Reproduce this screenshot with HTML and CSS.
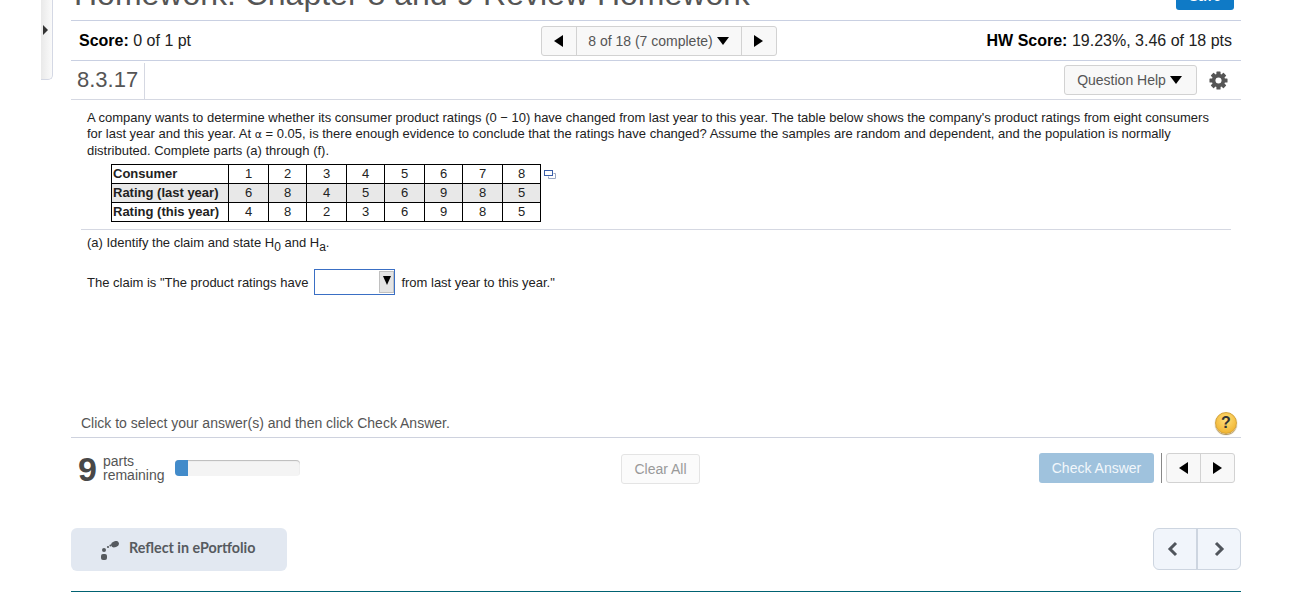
FILE: index.html
```html
<!DOCTYPE html>
<html lang="en">
<head>
<meta charset="utf-8">
<title>Homework</title>
<link rel="stylesheet" href="styles.css">
</head>
<body>
<div class="side-tab"><span class="tri tri-right tri-side"></span></div>
<main class="page">
  <header class="title-row">
    <h1 class="title">Homework: Chapter 8 and 9 Review Homework</h1>
    <button class="save">Save</button>
  </header>

  <section class="score-row">
    <div class="score"><b>Score:</b> 0 of 1 pt</div>
    <div class="pager">
      <span class="pager-btn"><span class="tri tri-left"></span></span>
      <span class="pager-mid">8 of 18 (7 complete)<span class="tri tri-down"></span></span>
      <span class="pager-btn"><span class="tri tri-right"></span></span>
    </div>
    <div class="hw"><b>HW Score:</b> 19.23%, 3.46 of 18 pts</div>
  </section>

  <section class="q-row">
    <div class="q-num">8.3.17</div>
    <div class="q-tools">
      <button class="help-btn">Question Help<span class="tri tri-down"></span></button>
      <svg class="gear" width="19" height="19" viewBox="0 0 20 20">
        <g fill="#555">
          <rect x="7.800" y="0.500" width="4.400" height="19" rx="0.600"/>
          <rect x="7.800" y="0.500" width="4.400" height="19" rx="0.600" transform="rotate(45 10 10)"/>
          <rect x="7.800" y="0.500" width="4.400" height="19" rx="0.600" transform="rotate(90 10 10)"/>
          <rect x="7.800" y="0.500" width="4.400" height="19" rx="0.600" transform="rotate(135 10 10)"/>
          <circle cx="10" cy="10" r="7"/>
        </g>
        <circle cx="10" cy="10" r="3.200" fill="#fff"/>
      </svg>
    </div>
  </section>

  <section class="question">
    <p class="prompt">A company wants to determine whether its consumer product ratings (0 − 10) have changed from last year to this year. The table below shows the company's product ratings from eight consumers for last year and this year. At <span class="alpha">α</span> = 0.05, is there enough evidence to conclude that the ratings have changed? Assume the samples are random and dependent, and the population is normally distributed. Complete parts (a) through (f).</p>
    <div class="table-wrap">
      <table class="data">
        <tr><th>Consumer</th><td>1</td><td>2</td><td>3</td><td>4</td><td>5</td><td>6</td><td>7</td><td>8</td></tr>
        <tr class="shade"><th>Rating (last year)</th><td>6</td><td>8</td><td>4</td><td>5</td><td>6</td><td>9</td><td>8</td><td>5</td></tr>
        <tr><th>Rating (this year)</th><td>4</td><td>8</td><td>2</td><td>3</td><td>6</td><td>9</td><td>8</td><td>5</td></tr>
      </table>
      <svg class="copy" width="12" height="9" viewBox="0 0 12 9">
        <rect x="0.500" y="0.500" width="8" height="5" fill="#fff" stroke="#3b5ea8"/>
        <path d="M9.500 3.500h2v5h-7v-2" fill="none" stroke="#9aa7c4"/>
      </svg>
    </div>
    <div class="part">
      <p class="part-a">(a) Identify the claim and state H<sub>0</sub> and H<sub>a</sub>.</p>
      <p class="claim">The claim is "The product ratings have <span class="select"><span class="select-arrow"><span class="tri tri-small"></span></span></span> from last year to this year."</p>
    </div>
  </section>

  <section class="hint-row">
    <span class="hint">Click to select your answer(s) and then click Check Answer.</span>
    <span class="help-circle">?</span>
  </section>

  <section class="action-row">
    <div class="parts">
      <span class="big-nine">9</span>
      <span class="parts-label">parts<br>remaining</span>
      <span class="progress"><span class="progress-fill"></span></span>
    </div>
    <button class="clear">Clear All</button>
    <div class="check-group">
      <button class="check">Check Answer</button>
      <span class="sep"></span>
      <div class="mini-nav">
        <span class="mini-btn"><span class="tri tri-left"></span></span>
        <span class="mini-btn"><span class="tri tri-right"></span></span>
      </div>
    </div>
  </section>

  <section class="foot-row">
    <button class="reflect">
      <svg class="reflect-icon" width="18" height="19" viewBox="0 0 18 19">
        <g fill="#565a5f">
          <rect x="0" y="13" width="6" height="6" rx="2"/>
          <circle cx="3" cy="9" r="2"/>
          <circle cx="7" cy="6" r="1.100"/>
          <circle cx="9.500" cy="4.500" r="1.100"/>
          <ellipse cx="14" cy="3.200" rx="4" ry="3" transform="rotate(-20 14 3.200)"/>
        </g>
      </svg>
      Reflect in ePortfolio
    </button>
    <div class="big-nav">
      <span class="big-btn"><svg class="chev-left" width="11" height="16" viewBox="0 0 11 16"><path d="M9 2L3 8l6 6" fill="none" stroke="#50555c" stroke-width="3"/></svg></span>
      <span class="big-btn"><svg width="11" height="16" viewBox="0 0 11 16"><path d="M2 2l6 6-6 6" fill="none" stroke="#50555c" stroke-width="3"/></svg></span>
    </div>
  </section>
</main>
</body>
</html>
```
FILE: styles.css
```css
* { box-sizing: border-box; }
html, body { margin: 0; padding: 0; height: 592px; overflow: hidden; background: #fff; }
body { font-family: "Liberation Sans", Arial, sans-serif; color: #333; font-size: 12px; position: relative; }
p, h1 { margin: 0; }
button { font-family: inherit; cursor: pointer; }

.tri { display: inline-block; width: 0; height: 0; border-style: solid; border-color: transparent; }
.tri-left { border-width: 6.500px 9px 6.500px 0; border-right-color: #000; }
.tri-right { border-width: 6.500px 0 6.500px 9px; border-left-color: #000; }
.tri-down { border-width: 8px 6.500px 0; border-top-color: #000; margin-left: 4px; }
.tri-small { border-width: 9px 4px 0; border-top-color: #000; }

.side-tab { position: absolute; left: 41px; top: 0; width: 12px; height: 80px; background: linear-gradient(90deg, #e9e9e9, #fafafa); border: 1px solid #d4d8e4; border-width: 0 1px 1px 0; border-radius: 0 0 5px 0; display: flex; align-items: flex-start; padding: 25px 0 0 2px; }
.tri-side { border-width: 5px 0 5px 5px; border-left-color: #333; }

.page { width: 1170px; margin-left: 71px; }

.title-row { height: 21px; border-bottom: 1px solid #c9d0e2; overflow: hidden; display: flex; justify-content: space-between; align-items: flex-start; padding: 0 7px 0 3px; }
.title { font-size: 32px; font-weight: normal; color: #555; line-height: 38px; margin-top: -25px; white-space: nowrap; }
.save { width: 58px; height: 28px; margin-top: -18px; background: #0f7ac6; border: 0; border-radius: 3px; color: #fff; font-size: 14px; padding: 0; }

.score-row { height: 40px; border-bottom: 1px solid #c9d0e2; display: grid; grid-template-columns: 1fr auto 1fr; align-items: center; padding: 0 9px 0 8px; font-size: 16px; color: #222; }
.score-row b { color: #000; }
.hw { text-align: right; }
.pager { display: flex; height: 30px; width: 236px; margin-left: 6px; border: 1px solid #d2d2d2; border-radius: 3px; background: #f8f8f8; font-size: 14px; color: #555; }
.pager-btn { width: 34px; display: flex; align-items: center; justify-content: center; }
.pager-mid { flex: 1; display: flex; align-items: center; justify-content: center; border: solid #d2d2d2; border-width: 0 1px; white-space: nowrap; }

.q-row { height: 39px; border-bottom: 1px solid #d5d8e2; display: flex; justify-content: space-between; align-items: center; }
.q-num { width: 74px; height: 36px; margin-top: 1px; line-height: 34px; font-size: 22px; color: #555; padding-left: 6px; border-right: 1px solid #d5d8e2; }
.q-tools { display: flex; align-items: center; gap: 12px; padding-right: 13px; }
.help-btn { width: 133px; height: 30px; padding: 0 2px 0 0; background: #f8f8f8; border: 1px solid #d2d2d2; border-radius: 3px; font-size: 14px; color: #555; display: flex; align-items: center; justify-content: center; }

.question { height: 308px; padding: 0 10px; color: #222; }
.prompt { padding: 10px 6px 0; line-height: 16px; font-size: 13px; height: 64px; }
.alpha { font-family: "DejaVu Sans", sans-serif; font-size: 11px; }
.table-wrap { display: flex; align-items: flex-start; padding-left: 30px; gap: 3px; height: 66px; border-bottom: 1px solid #d5d8e2; }
.data { border-collapse: collapse; table-layout: fixed; width: 430px; font-size: 13px; color: #222; }
.data tr { height: 19px; }
.data th, .data td { border: 1px solid #000; padding: 0 0 1px; font-weight: normal; line-height: 16px; }
.data th { width: 117px; text-align: left; padding-left: 1px; font-weight: bold; color: #222; }
.data td { text-align: center; }
.data td:nth-child(even) { width: 40px; }
.data td:nth-child(odd) { width: 38px; }
.shade th, .shade td { background: #e8e8e8; }
.copy { margin-top: 6px; }
.part { padding: 5px 6px 0; font-size: 13px; }
.part-a { line-height: 16px; height: 32px; }
.part-a sub { font-size: 12px; line-height: 0; }
.claim { display: flex; align-items: center; gap: 6px; height: 26px; margin-top: 2px; white-space: nowrap; }
.select { width: 81px; height: 26px; border: 1px solid #3a6fc4; background: #fff; display: flex; justify-content: flex-end; padding: 1px 0 0; }
.select-arrow { width: 15px; height: 22px; background: #e4e4e4; border: 1px solid #c0c0c0; display: flex; justify-content: center; padding-top: 4px; }

.hint-row { height: 30px; border-bottom: 1px solid #ced2de; display: flex; justify-content: space-between; align-items: center; padding: 0 4px 0 10px; font-size: 14px; color: #555; }
.help-circle { width: 22px; height: 22px; border-radius: 50%; background: radial-gradient(circle at 50% 35%, #ffe07c, #eda91f); border: 1px solid #d4a33a; box-shadow: 0 1px 1px #a98a4a; color: #333; font-weight: bold; font-size: 16px; text-align: center; line-height: 20px; }

.action-row { height: 90px; display: grid; grid-template-columns: 1fr auto 1fr; align-items: start; padding: 15px 6px 0 7px; }
.parts { display: flex; align-items: center; height: 32px; }
.big-nine { font-size: 34px; font-weight: bold; color: #484848; line-height: 32px; width: 25px; }
.parts-label { font-size: 14px; line-height: 14px; color: #555; width: 72px; margin-top: -2px; }
.progress { width: 125px; height: 16px; margin-top: -2px; background: #f4f4f4; border-radius: 4px; box-shadow: inset 0 1px 1px #bbb; display: block; overflow: hidden; }
.progress-fill { display: block; width: 13px; height: 16px; background: #428bca; }
.clear { width: 79px; height: 30px; margin: 1px 0 0 8px; background: #fbfbfb; border: 1px solid #e4e4e4; border-radius: 3px; font-size: 14px; color: #999; padding: 0; }
.check-group { display: flex; justify-content: flex-end; align-items: center; height: 30px; }
.check { width: 115px; height: 30px; background: #9fc2dd; border: 0; border-radius: 3px; color: #f2f7fb; font-size: 14px; padding: 0; }
.sep { width: 1px; height: 30px; background: #888; margin: 0 4px 0 7px; }
.mini-nav { display: flex; width: 69px; height: 30px; border: 1px solid #d2d2d2; border-radius: 3px; background: #f8f8f8; }
.mini-btn { flex: 1; display: flex; align-items: center; justify-content: center; }
.mini-btn + .mini-btn { border-left: 1px solid #d2d2d2; }

.foot-row { height: 64px; border-bottom: 1px solid #006272; display: flex; justify-content: space-between; align-items: flex-start; }
.reflect { width: 216px; height: 43px; background: #e2e8f1; border: 0; border-radius: 6px; font-family: Lato, sans-serif; font-weight: bold; font-size: 14.300px; color: #565a5f; display: flex; align-items: center; gap: 10px; padding: 0 0 5px 30px; }
.reflect-icon { margin-top: 7px; }
.big-nav { display: flex; width: 88px; height: 42px; border: 1px solid #cdd5e0; border-radius: 6px; background: #f1f5fb; }
.big-btn { flex: 1; display: flex; align-items: center; justify-content: center; }
.big-btn + .big-btn { border-left: 2px solid #cdd5e0; }
.chev-left { margin-right: 6px; }
```
